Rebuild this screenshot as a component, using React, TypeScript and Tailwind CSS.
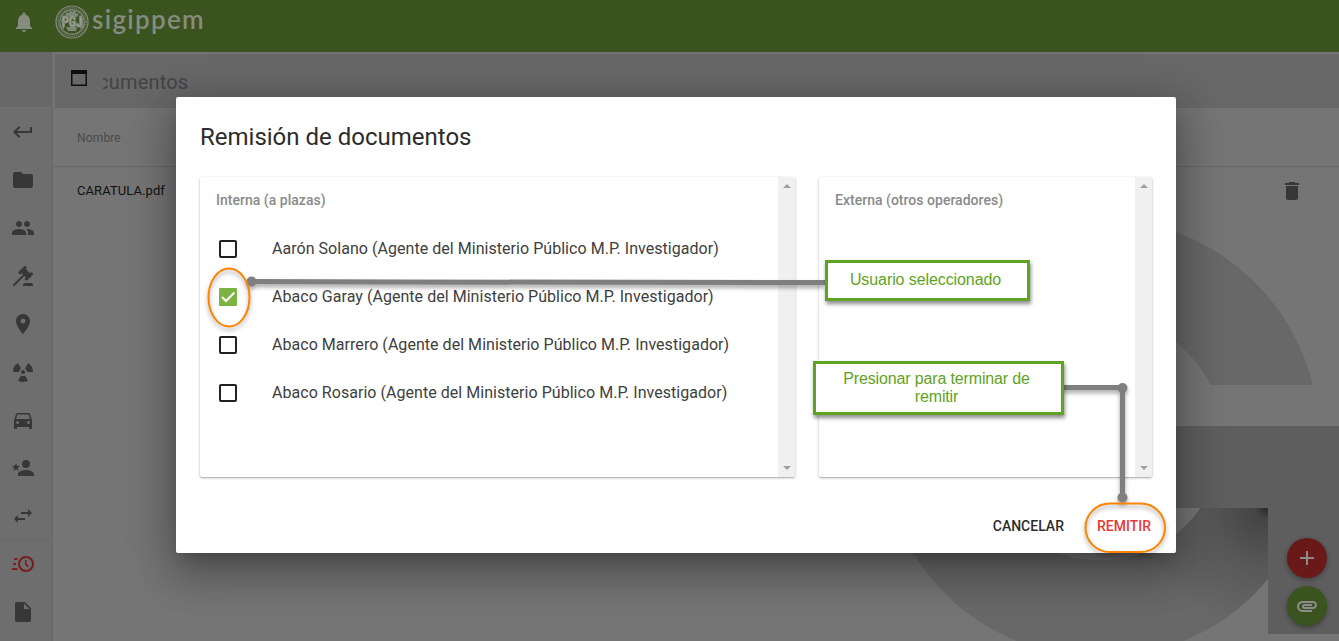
import type { ReactNode } from "react";
import { MdAdd, MdAttachment, MdDelete, MdDirectionsCar, MdFolder, MdInsertDriveFile, MdKeyboardReturn, MdNotifications, MdPeople, MdPlace } from "react-icons/md";

function Glyph({ d }: { d: string }) {
  return (
    <svg viewBox="0 0 24 24" className="size-6" fill="currentColor">
      <path d={d} />
    </svg>
  );
}

const GAVEL =
  "M2.3,20.28L11.9,10.68L10.5,9.26L9.78,9.97C9.39,10.36 8.76,10.36 8.37,9.97L7.66,9.26C7.27,8.87 7.27,8.24 7.66,7.85L13.32,2.19C13.71,1.8 14.34,1.8 14.73,2.19L15.44,2.9C15.83,3.29 15.83,3.92 15.44,4.31L14.73,5L18.97,9.26L19.68,8.55C20.07,8.16 20.71,8.16 21.1,8.55L21.8,9.26C22.19,9.65 22.19,10.29 21.8,10.68L16.15,16.33C15.76,16.72 15.12,16.72 14.73,16.33L14.02,15.63C13.63,15.24 13.63,14.6 14.02,14.21L14.73,13.5L13.32,12.09L3.71,21.7C3.32,22.09 2.69,22.09 2.3,21.7C1.91,21.31 1.91,20.67 2.3,20.28M20,19A2,2 0 0,1 22,21V22H12V21A2,2 0 0,1 14,19H20Z";
const RADIOACTIVE =
  "M12 10a2 2 0 1 0 0 4 2 2 0 0 0 0-4M2 12A10 10 0 0 1 7 3.34L10 8.54A4 4 0 0 0 8 12ZM22 12A10 10 0 0 0 17 3.34L14 8.54A4 4 0 0 1 16 12ZM7 20.66A10 10 0 0 0 17 20.66L14 15.46A4 4 0 0 1 10 15.46Z";
const PERSON_STAR =
  "M15 14c-2.67 0-8 1.33-8 4v2h16v-2c0-2.67-5.33-4-8-4m0-2a4 4 0 1 0 0-8 4 4 0 0 0 0 8M5 13.28l2.45 1.49-.65-2.81L9 10.08l-2.89-.25L5 7.19 3.87 9.83 1 10.08l2.18 1.88-.68 2.81z";
const SWAP = "M21,9L17,5V8H10V10H17V13M7,11L3,15L7,19V16H14V14H7V11Z";
const CLOCK_FAST =
  "M15,4A8,8 0 0,1 23,12A8,8 0 0,1 15,20A8,8 0 0,1 7,12A8,8 0 0,1 15,4M15,6A6,6 0 0,0 9,12A6,6 0 0,0 15,18A6,6 0 0,0 21,12A6,6 0 0,0 15,6M14,8H15.5V11.78L17.83,14.11L16.77,15.17L14,12.4V8M2,18A1,1 0 0,1 1,17A1,1 0 0,1 2,16H5.83C6.14,16.71 6.54,17.38 7,18H2M3,13A1,1 0 0,1 2,12A1,1 0 0,1 3,11H5.05L5,12L5.05,13H3M4,8A1,1 0 0,1 3,7A1,1 0 0,1 4,6H7C6.54,6.62 6.14,7.29 5.83,8H4Z";

const navItems: ReactNode[] = [
  <MdKeyboardReturn />,
  <MdFolder />,
  <MdPeople />,
  <Glyph d={GAVEL} />,
  <MdPlace />,
  <Glyph d={RADIOACTIVE} />,
  <MdDirectionsCar />,
  <Glyph d={PERSON_STAR} />,
  <Glyph d={SWAP} />,
];

function Seal() {
  return (
    <svg viewBox="0 0 34 34" className="size-[34px]" fill="none" stroke="#868c80">
      <circle cx="17" cy="17" r="16" strokeWidth="1.2" />
      <circle cx="17" cy="17" r="14" strokeWidth="2.2" strokeDasharray="1.3 .8" opacity=".6" />
      <circle cx="17" cy="17" r="12.2" strokeWidth="1.2" />
      <path d="M10 10l2-3 2 1 1-3 2 2 3-2 1 3 3 1-2 3h-8zM6 14h3v10H8zM25 13h3v9l-3 2zM11 22h11l-1 4h-8z" fill="#868c80" stroke="none" opacity=".9" />
      <text x="7" y="22" textLength="20" lengthAdjust="spacingAndGlyphs" className="font-['Roboto'] text-[14px] font-black" fill="#a1a59d">
        PGJ
      </text>
    </svg>
  );
}

function Sidebar() {
  return (
    <nav className="flex w-[53px] shrink-0 flex-col border-r-2 border-[#6a6a6a] bg-[#6e6e6e] text-[24px] text-[#373737]">
      <div className="h-14 shrink-0 border-b border-[#717171] bg-[#686868]" />
      {navItems.map((icon, i) => (
        <div key={i} className="flex h-12 shrink-0 items-center pl-[11px]">{icon}</div>
      ))}
      <div className="-mt-px flex h-[49px] shrink-0 items-center border-t border-[#676767] pl-[11px] text-[#7a1b1c]">
        <Glyph d={CLOCK_FAST} />
      </div>
      <div className="flex h-12 shrink-0 items-center pl-[11px]"><MdInsertDriveFile /></div>
    </nav>
  );
}

function Backdrop() {
  return (
    <svg className="absolute inset-0 size-full" viewBox="0 0 1339 641">
      <defs>
        <radialGradient id="shade" gradientUnits="userSpaceOnUse" cx="1268" cy="506" r="125">
          <stop offset="0" stopColor="#222" />
          <stop offset=".1" stopColor="#444" />
          <stop offset=".5" stopColor="#585858" />
          <stop offset="1" stopColor="#686868" />
        </radialGradient>
        <clipPath id="upper"><rect x="880" y="200" width="459" height="185" /></clipPath>
        <clipPath id="lower"><rect x="880" y="508" width="388" height="133" /></clipPath>
      </defs>
      <circle cx="1100" cy="438" r="171" fill="none" stroke="#686868" strokeWidth="97" clipPath="url(#upper)" />
      <path d="M1100 426H1339V634H1268V508H1100Z" fill="#5e5e5e" />
      <circle cx="1100" cy="438" r="171" fill="none" stroke="url(#shade)" strokeWidth="97" clipPath="url(#lower)" />
    </svg>
  );
}

function Panel({ title, className, children }: { title: string; className: string; children?: ReactNode }) {
  return (
    <section className={`flex h-[300px] overflow-hidden rounded-[2px] bg-white shadow-[0_1px_3px_rgba(0,0,0,0.25),0_1px_1px_rgba(0,0,0,0.14)] ${className}`}>
      <div className="flex-1 pl-4">
        <h3 className="flex h-12 items-center pb-0.5 text-[14px] font-medium tracking-[0.02px] text-[#8a8a8a]">{title}</h3>
        {children}
      </div>
      <div className="flex w-[17px] flex-col items-center justify-between bg-[#f0f0f0] py-[7px]">
        <svg width="8" height="4"><path d="M4 0L8 4H0Z" fill="#a0a0a0" /></svg>
        <svg width="8" height="4"><path d="M0 0H8L4 4Z" fill="#a0a0a0" /></svg>
      </div>
    </section>
  );
}

const people = [
  { name: "Aarón Solano", checked: false },
  { name: "Abaco Garay", checked: true },
  { name: "Abaco Marrero", checked: false },
  { name: "Abaco Rosario", checked: false },
];

function Dialog() {
  return (
    <div className="absolute left-[176px] top-[97px] flex h-[456px] w-[1000px] flex-col rounded-[2px] bg-white px-6 shadow-[0_11px_15px_-7px_rgba(0,0,0,0.2),0_24px_38px_3px_rgba(0,0,0,0.14),0_9px_46px_8px_rgba(0,0,0,0.22)]">
      <h2 className="flex h-20 items-center text-[24px] text-[#2c2c2c]">Remisión de documentos</h2>
      <div className="flex justify-between">
        <Panel title="Interna (a plazas)" className="w-[595px]">
          {people.map((p) => (
            <div key={p.name} className="flex h-12 items-center pl-[3px] text-[16px] tracking-[0.04px] text-[#404040]">
              {p.checked ? (
                <span className="flex size-[18px] items-center justify-center rounded-[1px] bg-[#7cb342]">
                  <svg viewBox="0 0 18 18" className="size-[18px]" fill="none" stroke="white" strokeWidth="2"><path d="M3 9l4 4L15.4 4.5" /></svg>
                </span>
              ) : (
                <span className="size-[18px] rounded-[2px] border-2 border-[#212121]" />
              )}
              <span className="ml-[35px]">{p.name} (Agente del Ministerio Público M.P. Investigador)</span>
            </div>
          ))}
        </Panel>
        <Panel title="Externa (otros operadores)" className="w-[333px]" />
      </div>
      <div className="flex flex-1 items-center justify-end gap-[33px] pt-[22px] pr-px text-[14px] font-medium text-[#2c2c2c]">
        <span>CANCELAR</span>
        <span className="text-[#e53935]">REMITIR</span>
      </div>
    </div>
  );
}

function Annotations() {
  return (
    <>
      <svg className="absolute inset-0 size-full drop-shadow-[0_3px_2px_rgba(0,0,0,0.35)]" viewBox="0 0 1339 641" fill="none">
        <path d="M251 281.5L400 282L825 282.5M1063 387.5H1122.5V497" stroke="#7f7f7f" strokeWidth="5" />
        <g fill="#7f7f7f">
          <circle cx="251.500" cy="281.500" r="5" />
          <circle cx="1122.500" cy="388" r="5" />
          <circle cx="1122.500" cy="497.500" r="5" />
        </g>
        <g stroke="#ff8400" strokeWidth="2">
          <ellipse cx="229" cy="297.500" rx="20.500" ry="29" />
          <rect x="1085.500" y="503.500" width="79.500" height="48.500" rx="24.250" />
        </g>
      </svg>
      <div className="absolute left-[825px] top-[260px] flex h-[41px] w-[205px] items-center justify-center border-3 border-[#5fa323] bg-white pb-0.5 pr-1 font-['Liberation_Sans',sans-serif] text-[16px] tracking-[-0.09px] text-[#5fa323] shadow-[1px_3px_4px_rgba(0,0,0,0.45)]">
        Usuario seleccionado
      </div>
      <div className="absolute left-[813px] top-[361px] flex h-[54px] w-[251px] items-center justify-center border-3 border-[#5fa323] bg-white pl-4 pr-5 text-center font-['Liberation_Sans',sans-serif] text-[16px] leading-[18px] tracking-[-0.14px] text-[#5fa323] shadow-[1px_3px_4px_rgba(0,0,0,0.45)]">
        Presionar para terminar de remitir
      </div>
    </>
  );
}

export default function App() {
  return (
    <div className="relative flex h-[641px] w-[1339px] flex-col overflow-hidden bg-[#757575] font-['Roboto',sans-serif]">
      <header className="flex h-[52px] shrink-0 items-center bg-[#3a531f] pb-2 pl-3 text-[#868c80]">
        <MdNotifications className="size-6" />
        <div className="ml-[19px] flex items-center gap-[3px]">
          <Seal />
          <span className="mb-1.5 font-['Lato',sans-serif] text-[26px] font-semibold leading-none tracking-[1.3px]">sigippem</span>
        </div>
      </header>
      <div className="flex min-h-0 flex-1">
        <Sidebar />
        <main className="flex flex-1 flex-col">
          <div className="ml-0.5 mt-0.5 flex h-[54px] shrink-0 items-center bg-[#686868]">
            <svg viewBox="0 0 24 24" className="mb-1.5 ml-3 size-6" fill="#0e0e0e"><path d="M4,4H20V20H4V4M5.500,8V18.500H18.500V8Z" fillRule="evenodd" /></svg>
            <div className="z-10 h-8 w-3 bg-[#686868]" />
            <span className="-ml-[5px] mt-0.5 text-[20px] tracking-[0.2px] text-[#444]">cumentos</span>
          </div>
          <div className="flex h-[59px] shrink-0 items-center border-b border-[#676767] pl-6 pt-0.5 text-[12px] tracking-[0.15px] text-[#4a4a4a]">Nombre</div>
          <div className="flex h-12 shrink-0 items-center justify-between pl-6 pr-[35px] text-[13px] tracking-[0.08px] text-[#101010]">
            <span>CARATULA.pdf</span>
            <MdDelete className="size-6 text-[#373737]" />
          </div>
        </main>
      </div>
      <Backdrop />
      <div className="absolute left-[1287px] top-[538px] flex flex-col gap-2 text-[24px] text-[#8c8c8c]">
        <div className="flex size-10 items-center justify-center rounded-full bg-[#691a18] shadow-[0_2px_5px_rgba(0,0,0,0.35)]"><MdAdd /></div>
        <div className="flex size-10 items-center justify-center rounded-full bg-[#3a531f] shadow-[0_2px_5px_rgba(0,0,0,0.35)]"><MdAttachment /></div>
      </div>
      <Dialog />
      <Annotations />
    </div>
  );
}
